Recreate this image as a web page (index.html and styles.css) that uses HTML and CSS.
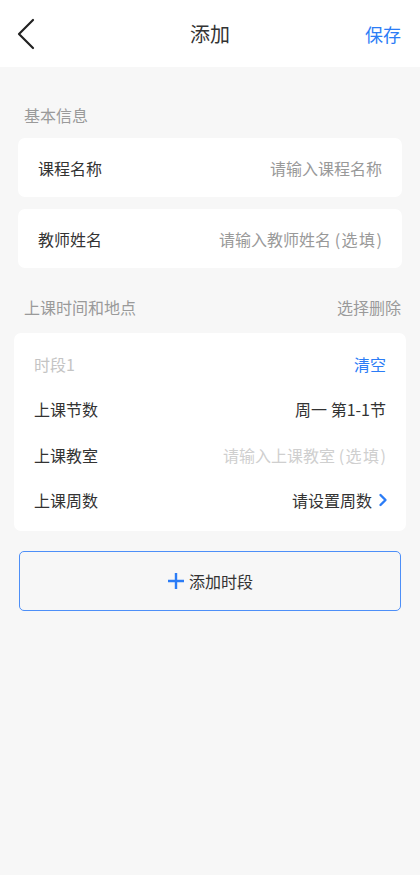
FILE: index.html
```html
<!DOCTYPE html>
<html lang="zh-CN">
<head>
    <meta charset="UTF-8">
    <meta name="viewport" content="width=device-width, initial-scale=1.0">
    <title>添加</title>
    <link rel="stylesheet" href="styles.css">
</head>
<body>

    <!-- Top Bar -->
    <div class="top-bar">
        <div class="back-btn">
            <svg width="20" height="32" viewBox="0 0 20 32"><path d="M17 2 L3 16 L17 30" fill="none" stroke="#222" stroke-width="2.2" stroke-linecap="round" stroke-linejoin="round"/></svg>
        </div>
        <div class="title">添加</div>
        <div class="save-btn">保存</div>
    </div>

    <div class="content">
        <div class="section-title">基本信息</div>

        <div class="card input-card">
            <span class="label">课程名称</span>
            <span class="placeholder">请输入课程名称</span>
        </div>
        <div class="card input-card">
            <span class="label">教师姓名</span>
            <span class="placeholder">请输入教师姓名 <span class="paren">(选填)</span></span>
        </div>

        <div class="section-title row-between">
            <span>上课时间和地点</span>
            <span>选择删除</span>
        </div>

        <!-- Time Slot -->
        <div class="card slot-card">
            <div class="slot-row">
                <span class="slot-name">时段1</span>
                <span class="clear-btn">清空</span>
            </div>
            <div class="slot-row">
                <span class="label">上课节数</span>
                <span class="value">周一 第1-1节</span>
            </div>
            <div class="slot-row">
                <span class="label">上课教室</span>
                <span class="light">请输入上课教室 <span class="paren">(选填)</span></span>
            </div>
            <div class="slot-row">
                <span class="label">上课周数</span>
                <span class="value">请设置周数
                    <svg class="arrow" width="10" height="14" viewBox="0 0 10 14"><path d="M2.5 2 L7.5 7 L2.5 12" fill="none" stroke="#2b7cf6" stroke-width="2.4" stroke-linecap="round" stroke-linejoin="round"/></svg>
                </span>
            </div>
        </div>

        <div class="add-btn">
            <svg width="18" height="18" viewBox="0 0 18 18"><path d="M9 1 V17 M1 9 H17" stroke="#2b7cf6" stroke-width="2.4"/></svg>
            <span>添加时段</span>
        </div>
    </div>

</body>
</html>
```

FILE: styles.css
```css
* { margin: 0; padding: 0; box-sizing: border-box; font-family: 'Noto Sans CJK SC', 'Noto Sans', sans-serif; }
body { background: #f7f7f7; color: #333; width: 420px; min-height: 875px; }

/* Top Bar */
.top-bar {
    height: 67px; background: white; display: flex; align-items: center;
    justify-content: space-between; padding: 0 19px 0 16px; position: relative;
}
.back-btn { display: flex; align-items: center; width: 24px; }
.title { position: absolute; left: 0; right: 0; text-align: center; font-size: 20px; color: #333; pointer-events: none; }
.save-btn { font-size: 18px; color: #2b7cf6; }

/* Content */
.content { padding: 36px 18px 0; }
.section-title { font-size: 16px; color: #9a9a9a; padding: 0 0 11px 6px; }
.row-between { display: flex; justify-content: space-between; padding: 15px 1px 14px 6px; }

.card { background: white; border-radius: 7px; }
.input-card {
    height: 59px; display: flex; align-items: center; justify-content: space-between;
    padding: 0 20px; margin-bottom: 12px;
}
.label { font-size: 16px; color: #333; white-space: nowrap; }
.placeholder { font-size: 16px; color: #999; white-space: nowrap; }
.paren { letter-spacing: 1.5px; margin-right: -1.5px; }

/* Time Slot */
.slot-card { margin: 0 -4px; padding: 8px 20px 8px 20px; }
.slot-row { height: 45.5px; display: flex; align-items: center; justify-content: space-between; }
.slot-name { font-size: 16px; color: #c4c4c4; }
.clear-btn { font-size: 16px; color: #2b7cf6; }
.value { font-size: 16px; color: #333; display: flex; align-items: center; gap: 6px; white-space: nowrap; }
.light { font-size: 16px; color: #cfcfcf; white-space: nowrap; }
.arrow { margin-right: -2px; }

/* Add Button */
.add-btn {
    margin: 20px 1px 0; height: 60px; border: 1.5px solid #4d8ff8; border-radius: 5px;
    display: flex; align-items: center; justify-content: center; gap: 4px;
    font-size: 16px; color: #333;
}
```
